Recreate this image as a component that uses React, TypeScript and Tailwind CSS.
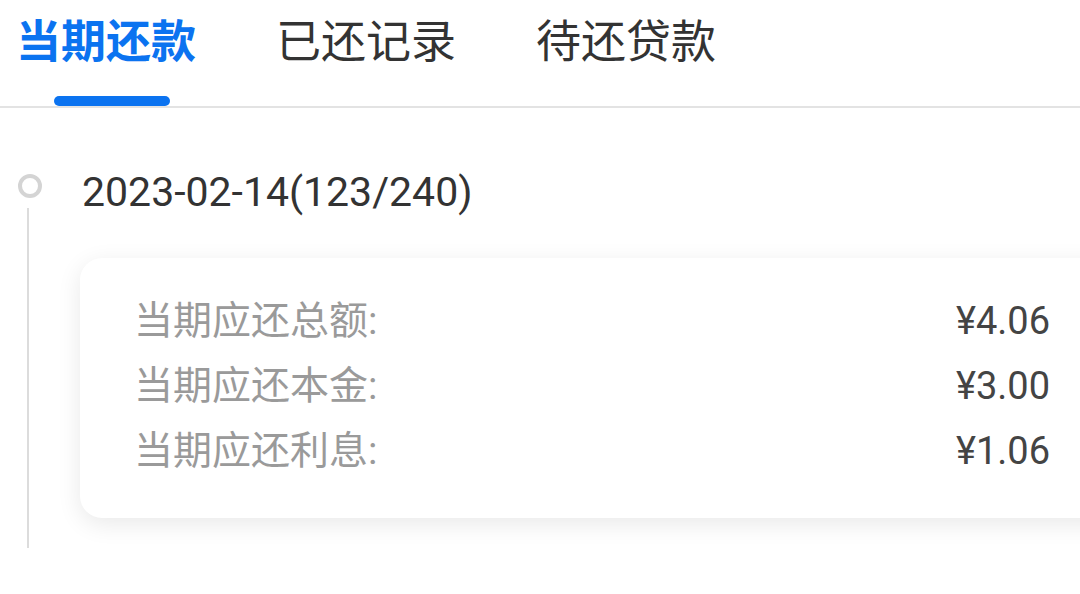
const tabs = ["当期还款", "已还记录", "待还贷款"];

const rows = [
  { label: "当期应还总额:", value: "¥4.06" },
  { label: "当期应还本金:", value: "¥3.00" },
  { label: "当期应还利息:", value: "¥1.06" },
];

export default function App() {
  return (
    <div
      className="h-[594px] w-[1080px] overflow-hidden bg-white"
      style={{ fontFamily: 'Roboto, "Noto Sans CJK SC", sans-serif' }}
    >
      {/* tab bar */}
      <div className="flex h-[108px] gap-[80px] border-b-2 border-[#e3e3e3] pl-[16px]">
        {tabs.map((t, i) => (
          <div key={t} className="flex h-full w-[180px] flex-col">
            <div
              className={
                "pt-[20px] text-[45px] leading-[45px] " +
                (i === 0 ? "font-bold text-[#0b73f0]" : "text-[#333333]")
              }
            >
              {t}
            </div>
            {i === 0 && (
              <div className="mt-auto ml-[38px] h-[10px] w-[116px] rounded-full bg-[#0b73f0]" />
            )}
          </div>
        ))}
      </div>

      {/* timeline */}
      <div className="flex pt-[64px]">
        <div className="flex w-[80px] shrink-0 flex-col pl-[18px] pt-[2px]">
          <div className="h-[24px] w-[24px] rounded-full border-4 border-[#d4d4d4]" />
          <div className="mt-[10px] ml-[9px] h-[340px] w-[2px] bg-[#dcdcdc]" />
        </div>
        <div className="flex-1">
          <div className="-mt-[5px] pl-[2px] text-[41px] leading-[50px] text-[#333333]">2023-02-14(123/240)</div>
          <div className="mt-[41px] mr-[-40px] rounded-[22px] bg-white pt-[31px] pb-[34px] pl-[54px] pr-[70px] shadow-[0_6px_24px_rgba(0,0,0,0.09)]">
            {rows.map((r) => (
              <div key={r.label} className="flex items-center justify-between leading-[65px]">
                <span className="text-[39px] text-[#9a9a9a]">{r.label}</span>
                <span className="text-[38px] text-[#444444]">{r.value}</span>
              </div>
            ))}
          </div>
        </div>
      </div>
    </div>
  );
}
